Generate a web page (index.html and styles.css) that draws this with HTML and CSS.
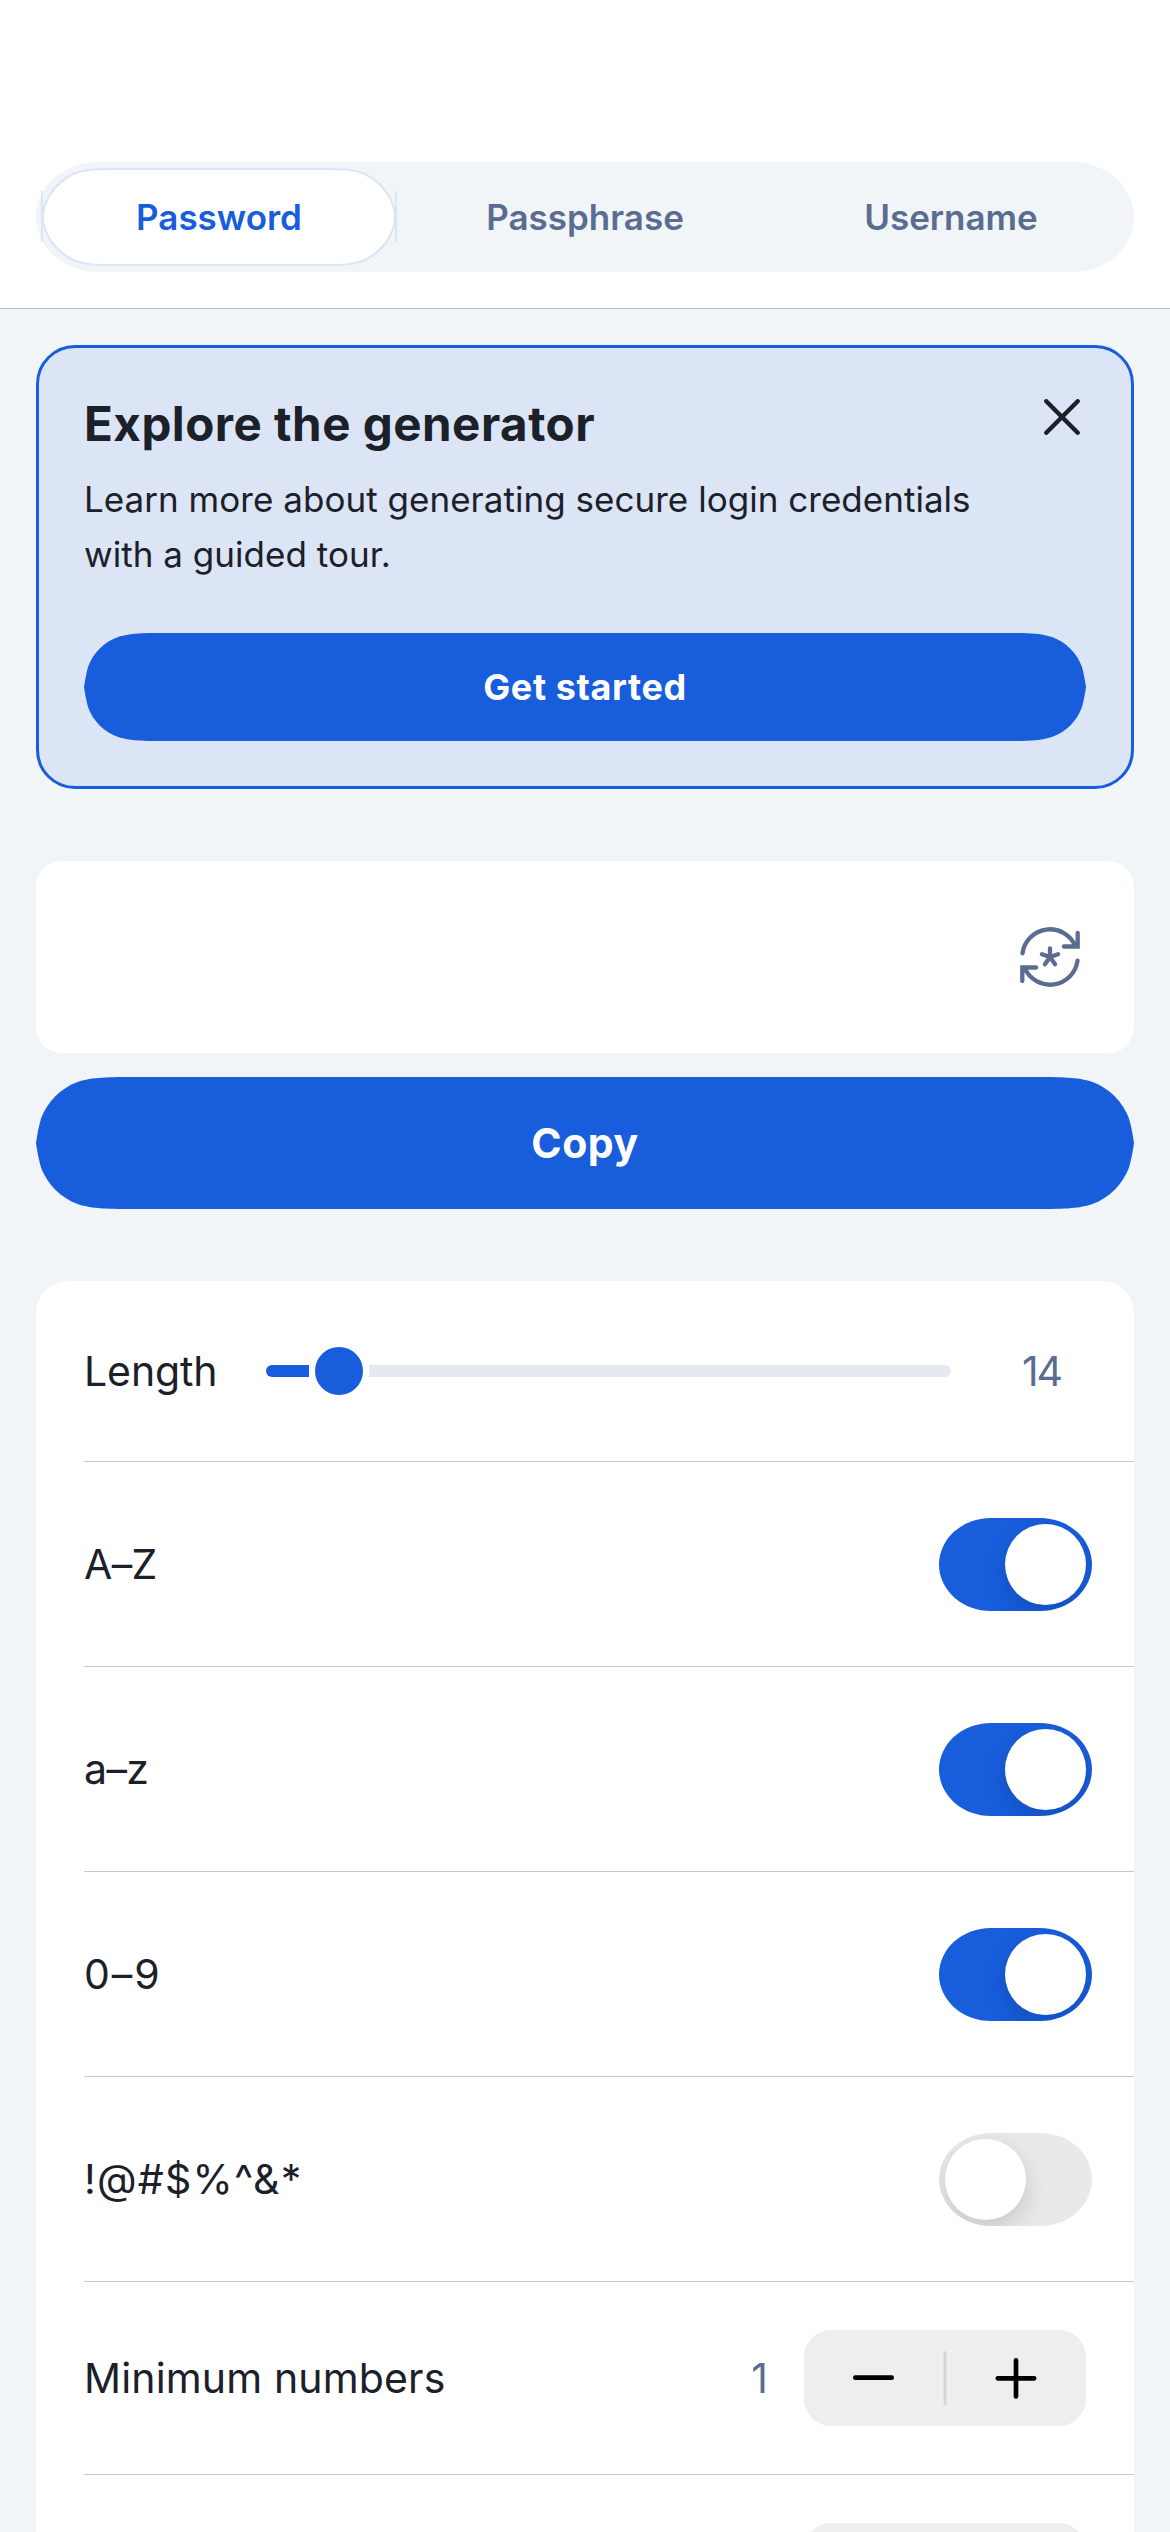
FILE: index.html
```
<!DOCTYPE html>
<html lang="en">
<head>
<meta charset="utf-8">
<title>Generator</title>
<link rel="stylesheet" href="styles.css">
</head>
<body>
<header class="header">
  <nav class="tabs">
    <a class="tab tab-active">
      <svg class="tab-outline" width="356" height="98" viewBox="0 0 356 98" fill="none" stroke="#dbe5f6" stroke-width="2">
        <path fill="#fff" d="M74 1H282C300 1 312 1 324 6C345 17 354 35 354 49S345 81 324 92C312 97 300 97 282 97H74C56 97 44 97 32 92C11 81 2 63 2 49S11 17 32 6C44 1 56 1 74 1Z"/>
        <path d="M1 23V74M355 23V74"/>
      </svg>
      <span class="tab-label">Password</span>
    </a>
    <a class="tab">Passphrase</a>
    <a class="tab">Username</a>
  </nav>
</header>
<main class="content">
  <section class="banner">
    <div class="banner-head">
      <h1 class="banner-title">Explore the generator</h1>
      <svg class="close" width="36" height="36" viewBox="0 0 36 36" fill="none" stroke="#1b2029" stroke-width="4.4" stroke-linecap="round"><path d="M2.3 2.3 33.7 33.7M33.7 2.3 2.3 33.7"/></svg>
    </div>
    <p class="banner-text">Learn more about generating secure login credentials<br>with a guided tour.</p>
    <button class="button button-small">
      <svg class="button-shape" width="1002" height="108" viewBox="0 0 1002 108"><path d="M82.5 0H919.5C943 0 955 0 968 4C982 9 993 20 998 34C1000 41 1001 48 1002 54C1001 60 1000 67 998 74C993 88 982 99 968 104C955 108 943 108 919.5 108H82.5C59 108 47 108 34 104C20 99 9 88 4 74C2 67 1 60 0 54C1 48 2 41 4 34C9 20 20 9 34 4C47 0 59 0 82.5 0Z"/></svg>
      <span class="button-label">Get started</span>
    </button>
  </section>
  <section class="field">
    <svg width="60" height="60" viewBox="0 0 60 60" fill="none" stroke="#5a6d91" stroke-width="4.3" stroke-linecap="round" stroke-linejoin="miter">
      <path d="M2.5 26.3A27.7 27.7 0 0 1 55.3 18.8M43.9 19.5H57.7V6M57.5 33.7A27.7 27.7 0 0 1 4.7 41.2M16.1 40.5H2.3V54"/>
      <path d="M30 30V21.5M30 30 38.1 27.3M30 30 35.1 37.2M30 30 24.9 37.2M30 30 21.9 27.3"/>
    </svg>
  </section>
  <button class="button button-large">
    <svg class="button-shape" width="1098" height="132" viewBox="0 0 1098 132"><path d="M100.8 0H997.2C1026 0 1041 0 1056.5 5C1073 11 1087 25 1093 41.5C1095.5 50 1097 59 1098 66C1097 73 1095.5 82 1093 90.5C1087 107 1073 121 1056.5 127C1041 132 1026 132 997.2 132H100.8C72 132 57 132 41.5 127C25 121 11 107 5 90.5C2.5 82 1 73 0 66C1 59 2.5 50 5 41.5C11 25 25 11 41.5 5C57 0 72 0 100.8 0Z"/></svg>
    <span class="button-label">Copy</span>
  </button>
  <section class="options">
    <div class="row row-slider">
      <span class="label label-length">Length</span>
      <div class="slider"><span class="slider-fill"></span><span class="slider-thumb"></span><span class="slider-rest"></span></div>
      <span class="value value-length">14</span>
    </div>
    <div class="row row-toggle"><span class="label label-letters">A–Z</span><span class="toggle toggle-on"><span class="knob"></span></span></div>
    <div class="row row-toggle"><span class="label label-letters">a–z</span><span class="toggle toggle-on"><span class="knob"></span></span></div>
    <div class="row row-toggle"><span class="label label-digits">0–9</span><span class="toggle toggle-on"><span class="knob"></span></span></div>
    <div class="row row-toggle"><span class="label label-symbols">!@#$%^&amp;*</span><span class="toggle"><span class="knob"></span></span></div>
    <div class="row row-stepper">
      <span class="label label-minimum">Minimum numbers</span>
      <span class="value value-min">1</span>
      <svg class="stepper" width="282" height="96" viewBox="0 0 282 96" fill="none" stroke="#000" stroke-width="4.7" stroke-linecap="round"><path stroke="#d5d5d5" stroke-width="3" d="M141 22.5V73.5"/><path d="M51.3 47.7H87.7M193.8 48.3H230.2M212 30.3V66.5"/></svg>
    </div>
    <div class="row row-stepper row-cut"><svg class="stepper" width="282" height="96"></svg></div>
  </section>
</main>
</body>
</html>
```

FILE: styles.css
```
* { box-sizing: border-box; }

body {
  margin: 0;
  width: 1170px;
  height: 2532px;
  overflow: hidden;
  background: #f1f5f8;
  color: #1b2029;
  font-family: Inter, "Liberation Sans", sans-serif;
}

.header {
  height: 309px;
  padding: 162px 36px 0;
  background: #fff;
  border-bottom: 1px solid #bcc0c3;
}

.tabs {
  display: flex;
  height: 110px;
  border-radius: 62px / 55px;
  background: #f1f5f8;
}

.tab {
  position: relative;
  flex: 1;
  display: flex;
  align-items: center;
  justify-content: center;
  color: #5a6d91;
  font-size: 35px;
  font-weight: 600;
}

.tab-active { color: #175ddc; }
.tab-outline { position: absolute; left: 5px; top: 6px; }
.tab-label { position: relative; }

.content { padding: 36px 36px 0; }

.banner {
  height: 444px;
  padding: 45px;
  border: 3px solid #175ddc;
  border-radius: 39px;
  background: #dbe5f6;
}

.banner-head {
  display: flex;
  justify-content: space-between;
  height: 79px;
}

.banner-title {
  margin: 0;
  font-size: 47.5px;
  font-weight: 700;
  letter-spacing: 0.5px;
  line-height: 62px;
}

.close { margin: 6px 6px 0 0; }

.banner-text {
  margin: 0 0 51px;
  font-size: 35px;
  letter-spacing: 0.03px;
  line-height: 55px;
}

.button {
  position: relative;
  display: flex;
  align-items: center;
  justify-content: center;
  width: 100%;
  padding: 0;
  border: 0;
  background: none;
  color: #fff;
  font-family: inherit;
  font-weight: 700;
}

.button-shape { position: absolute; left: 0; top: 0; fill: #175ddc; }
.button-label { position: relative; }
.button-small { height: 108px; font-size: 36px; letter-spacing: 0.6px; }
.button-large { height: 132px; font-size: 41px; letter-spacing: 0.5px; }

.field {
  display: flex;
  align-items: center;
  justify-content: flex-end;
  height: 192px;
  margin: 72px 0 24px;
  padding-right: 54px;
  border-radius: 26px;
  background: #fff;
}

.options {
  height: 1251px;
  margin-top: 72px;
  padding-left: 48px;
  overflow: hidden;
  border-radius: 32px 32px 0 0;
  background: #fff;
}

.row {
  display: flex;
  align-items: center;
  border-bottom: 1px solid #c6c6c8;
  font-size: 41px;
}

.row-slider { height: 181px; }
.row-toggle { height: 205px; padding-right: 42px; }
.row-stepper { height: 193px; padding-right: 48px; }
.row-cut { justify-content: flex-end; }

.label { flex: 1; }
.label-length { flex: none; width: 182px; letter-spacing: -0.1px; }
.label-letters { letter-spacing: -0.6px; }
.label-digits { letter-spacing: 2px; }
.label-symbols { letter-spacing: 1.2px; }
.label-minimum { letter-spacing: 0.15px; }
.value { color: #5a6d91; }
.value-length { flex: none; width: 133px; text-align: center; letter-spacing: -2px; padding-left: 48px; }
.value-min { margin-right: 36px; }

.slider { display: flex; align-items: center; width: 685px; }
.slider-fill { width: 43px; height: 12px; border-radius: 6px 0 0 6px; background: #175ddc; }
.slider-thumb { width: 48px; height: 48px; margin: 0 6px; border-radius: 50%; background: #175ddc; }
.slider-rest { flex: 1; height: 12px; border-radius: 0 6px 6px 0; background: #e6e9f0; }

.toggle {
  display: flex;
  width: 153px;
  height: 93px;
  margin-top: 1px;
  padding: 6px;
  overflow: hidden;
  border-radius: 52px / 46.5px;
  background: #e9e9e9;
}

.toggle-on { justify-content: flex-end; background: #175ddc; }

.knob {
  width: 81px;
  height: 81px;
  border-radius: 50%;
  background: #fff;
  box-shadow: 0 9px 24px rgba(0, 0, 0, 0.15);
}

.stepper { border-radius: 27px; background: #eeeeee; }
```
